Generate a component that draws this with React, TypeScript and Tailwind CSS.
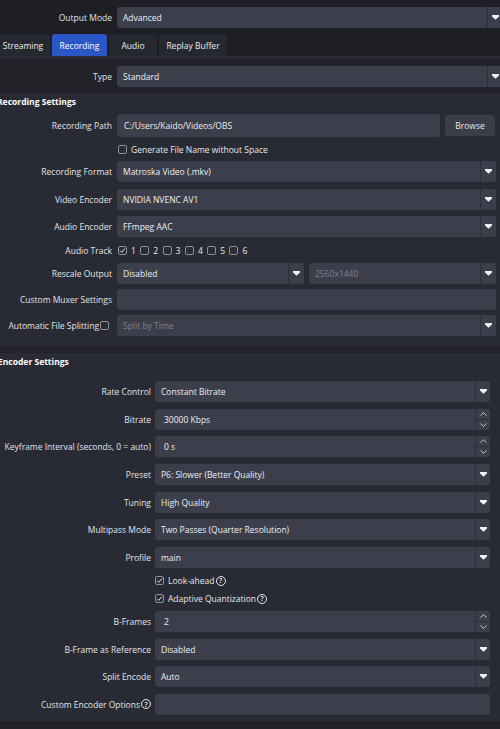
import type { ReactNode } from "react"

// Output settings panel (advanced mode, Recording tab)

function Arrow() {
  return (
    <svg width="7" height="5" viewBox="0 0 7 5" className="block">
      <path d="M0 0h7v1.4L3.5 4.8 0 1.4z" fill="#f2f3f5" />
    </svg>
  )
}

function Select({ value, disabled, className = "", arrowW = "w-[16px]" }: { value: string; disabled?: boolean; className?: string; arrowW?: string }) {
  return (
    <div className={`flex h-[21px] items-center rounded-[3px] bg-[#3c3f4b] ${className}`}>
      <span className={`flex-1 truncate py-[2px] pl-[6px] ${disabled ? "text-[#7f838d]" : "text-[#eceef2]"}`}>{value}</span>
      <div className={`flex h-full ${arrowW} items-center justify-center border-l border-[#2c2f38]`}>
        <Arrow />
      </div>
    </div>
  )
}

function TextInput({ value = "", className = "" }: { value?: string; className?: string }) {
  return (
    <div className={`flex h-[21px] items-center rounded-[3px] bg-[#3c3f4b] pl-[7px] text-[#eceef2] ${className}`}>
      {value}
    </div>
  )
}

function Chevron({ up }: { up?: boolean }) {
  return (
    <svg width="7" height="4" viewBox="0 0 7 4" className="block">
      <path d={up ? "M0.5 3.5L3.5 0.7 6.5 3.5" : "M0.5 0.5L3.5 3.3 6.5 0.5"} fill="none" stroke="#c4c6cc" strokeWidth="1" />
    </svg>
  )
}

function SpinBox({ value }: { value: string }) {
  return (
    <div className="flex h-[21px] items-center rounded-[3px] bg-[#3c3f4b]">
      <span className="flex-1 pl-[9px] text-[#eceef2]">{value}</span>
      <div className="flex h-full w-[15px] flex-col border-l border-[#2c2f38]">
        <div className="flex flex-1 items-center justify-center border-b border-[#2c2f38]">
          <Chevron up />
        </div>
        <div className="flex flex-1 items-center justify-center">
          <Chevron />
        </div>
      </div>
    </div>
  )
}

function Checkbox({ checked }: { checked?: boolean }) {
  return (
    <span className="flex h-[9px] w-[9px] shrink-0 items-center justify-center rounded-[2px] border border-[#8c8f98] bg-[#2a2d36]">
      {checked && (
        <svg width="7" height="7" viewBox="0 0 7 7">
          <path d="M1 3.6L2.8 5.4 6 1.4" fill="none" stroke="#d8dade" strokeWidth="1" />
        </svg>
      )}
    </span>
  )
}

function Help() {
  return (
    <span className="ml-[1px] flex h-[10px] w-[10px] shrink-0 items-center justify-center rounded-full border border-[#e6e7ea] text-[7px] font-semibold leading-none text-[#e6e7ea]">
      ?
    </span>
  )
}

function Row({ label, labelW, children, className = "" }: { label: ReactNode; labelW: string; children: ReactNode; className?: string }) {
  return (
    <div className={`flex items-center ${className}`}>
      <div className={`flex shrink-0 items-center justify-end whitespace-nowrap text-[#e1e3e8] ${labelW}`}>{label}</div>
      <div className="min-w-0 flex-1">{children}</div>
    </div>
  )
}

export default function App() {
  const rec = "w-[117px] pr-[5px]"
  const enc = "w-[155px] pr-[4px]"

  return (
    <div className="h-[729px] w-[500px] overflow-hidden bg-[#1d1f25] text-[8.5px] leading-[9px]" style={{ fontFamily: '"Open Sans", "Noto Sans", sans-serif' }}>
      {/* Output mode */}
      <div className="pt-[7px]">
        <div className="flex items-center">
          <div className="w-[112px] text-right text-[#e1e3e8]">Output Mode</div>
          <Select value="Advanced" className="-mr-[3px] ml-[5px] h-[20px] flex-1" />
        </div>
      </div>

      {/* Tabs */}
      <div className="mt-[6px] flex h-[22px] gap-[2px] pl-0">
        <div className="-ml-[4px] flex w-[54px] items-center justify-center rounded-t-[3px] bg-[#262830] text-[#e6e8ec]">Streaming</div>
        <div className="flex w-[55px] items-center justify-center rounded-t-[3px] bg-[#2a56c6] text-white">Recording</div>
        <div className="flex w-[48px] items-center justify-center rounded-t-[3px] bg-[#262830] text-[#e6e8ec]">Audio</div>
        <div className="flex w-[68px] items-center justify-center rounded-t-[3px] bg-[#262830] text-[#e6e8ec]">Replay Buffer</div>
      </div>

      <div className="border-t-2 border-[#2b2e37] bg-[#212329] pt-[8px]">
        <div className="flex items-center">
          <div className="w-[112px] text-right text-[#e1e3e8]">Type</div>
          <Select value="Standard" className="-mr-[3px] ml-[5px] flex-1" />
        </div>

        {/* Recording settings */}
        <div className="mt-[6px] bg-[#282b34] pb-[10px] pr-[4px]">
          <div className="-ml-[3px] flex h-[16px] items-center font-bold text-white">Recording Settings</div>

          <Row label="Recording Path" labelW={rec} className="mt-[5px] h-[23px]">
            <div className="flex items-center gap-[5px]">
              <TextInput value="C:/Users/Kaido/Videos/OBS" className="h-[23px] flex-1" />
              <div className="mr-[1px] flex h-[21px] w-[50px] items-center justify-center rounded-[3px] bg-[#3b3e49] text-[#e6e8ec]">Browse</div>
            </div>
          </Row>

          <Row label="" labelW={rec} className="mt-[7px] h-[10px]">
            <div className="flex items-center gap-[4px] pl-[1px] text-[#e6e8ec]">
              <Checkbox />
              <span>Generate File Name without Space</span>
            </div>
          </Row>

          <Row label="Recording Format" labelW={rec} className="mt-[7px]">
            <Select value="Matroska Video (.mkv)" />
          </Row>
          <Row label="Video Encoder" labelW={rec} className="mt-[7px]">
            <Select value="NVIDIA NVENC AV1" />
          </Row>
          <Row label="Audio Encoder" labelW={rec} className="mt-[6px]">
            <Select value="FFmpeg AAC" />
          </Row>

          <Row label="Audio Track" labelW={rec} className="mt-[8px] h-[10px]">
            <div className="flex items-center pl-[1px] text-[#e6e8ec]">
              {[1, 2, 3, 4, 5, 6].map((n) => (
                <div key={n} className="flex w-[22.3px] items-center gap-[4px]">
                  <Checkbox checked={n === 1} />
                  <span>{n}</span>
                </div>
              ))}
            </div>
          </Row>

          <Row label="Rescale Output" labelW={rec} className="mt-[8px]">
            <div className="flex gap-[5px]">
              <Select value="Disabled" className="flex-1" />
              <Select value="2560x1440" disabled className="flex-1" />
            </div>
          </Row>
          <Row label="Custom Muxer Settings" labelW={rec} className="mt-[5px]">
            <TextInput />
          </Row>
          <Row
            label={
              <span className="flex items-center gap-[1px] pr-[3px]">
                Automatic File Splitting
                <Checkbox />
              </span>
            }
            labelW="w-[117px] pr-[5px]"
            className="mt-[5px]"
          >
            <Select value="Split by Time" disabled />
          </Row>
        </div>

        {/* Encoder settings */}
        <div className="mt-[7px] bg-[#282b34] pb-[6px] pr-[10px]">
          <div className="-ml-[2px] flex h-[16px] items-center font-bold text-white">Encoder Settings</div>

          <div className="mt-[12px] flex flex-col gap-[6.67px]">
            <Row label="Rate Control" labelW={enc}>
              <Select value="Constant Bitrate" arrowW="w-[15px]" />
            </Row>
            <Row label="Bitrate" labelW={enc}>
              <SpinBox value="30000 Kbps" />
            </Row>
            <Row label="Keyframe Interval (seconds, 0 = auto)" labelW={enc}>
              <SpinBox value="0 s" />
            </Row>
            <Row label="Preset" labelW={enc}>
              <Select value="P6: Slower (Better Quality)" arrowW="w-[15px]" />
            </Row>
            <Row label="Tuning" labelW={enc}>
              <Select value="High Quality" arrowW="w-[15px]" />
            </Row>
            <Row label="Multipass Mode" labelW={enc}>
              <Select value="Two Passes (Quarter Resolution)" arrowW="w-[15px]" />
            </Row>
            <Row label="Profile" labelW={enc}>
              <Select value="main" arrowW="w-[15px]" />
            </Row>
          </div>

          <Row label="" labelW={enc} className="mt-[8px] h-[10px]">
            <div className="flex items-center gap-[4px] text-[#e6e8ec]">
              <Checkbox checked />
              <span className="flex items-center">
                Look-ahead
                <Help />
              </span>
            </div>
          </Row>
          <Row label="" labelW={enc} className="mt-[8px] h-[10px]">
            <div className="flex items-center gap-[4px] text-[#e6e8ec]">
              <Checkbox checked />
              <span className="flex items-center">
                Adaptive Quantization
                <Help />
              </span>
            </div>
          </Row>

          <div className="mt-[7px] flex flex-col gap-[6.67px]">
            <Row label="B-Frames" labelW={enc}>
              <SpinBox value="2" />
            </Row>
            <Row label="B-Frame as Reference" labelW={enc}>
              <Select value="Disabled" arrowW="w-[15px]" />
            </Row>
            <Row label="Split Encode" labelW={enc}>
              <Select value="Auto" arrowW="w-[15px]" />
            </Row>
            <Row
              label={
                <span className="flex items-center">
                  Custom Encoder Options
                  <Help />
                </span>
              }
              labelW={enc}
            >
              <TextInput />
            </Row>
          </div>
        </div>
        <div className="h-[20px]" />
      </div>
    </div>
  )
}
